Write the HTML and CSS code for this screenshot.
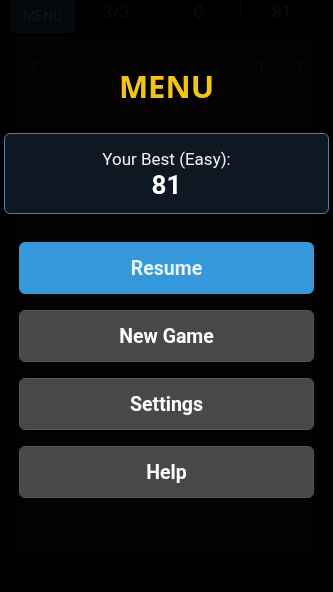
FILE: index.html
```html
<!DOCTYPE html>
<html lang="en">
<head>
    <meta charset="UTF-8">
    <meta name="viewport" content="width=device-width, initial-scale=1.0">
    <title>Menu</title>
    <link rel="stylesheet" href="styles.css">
</head>
<body>

    <!-- game behind the menu (dimmed) -->
    <div class="game">
        <div class="top-bar">
            <button class="menu-btn">MENU</button>
            <div class="stat">3/3</div>
            <div class="stat">0</div>
            <div class="stat best">81</div>
        </div>
        <div class="board">
            <div class="row">
                <span>2</span><span></span><span></span><span></span><span></span><span></span><span>1</span><span>1</span>
            </div>
        </div>
    </div>

    <!-- menu overlay -->
    <div class="overlay">
        <h1 class="menu-title">MENU</h1>

        <div class="best-box">
            <div class="best-label">Your Best (Easy):</div>
            <div class="best-score">81</div>
        </div>

        <div class="menu-buttons">
            <button class="menu-item primary">Resume</button>
            <button class="menu-item">New Game</button>
            <button class="menu-item">Settings</button>
            <button class="menu-item">Help</button>
        </div>
    </div>

</body>
</html>
```

FILE: styles.css
```css
body {
    font-family: Roboto, "Liberation Sans", Arial, sans-serif;
    margin: 0;
    padding: 0;
    background-color: #000;
    color: white;
    height: 592px;
    overflow: hidden;
}

/* dimmed game underneath */
.game {
    height: 100%;
    display: flex;
    flex-direction: column;
}

.top-bar {
    display: flex;
    align-items: center;
    height: 34px;
    padding: 0 10px;
}

.menu-btn {
    width: 65px;
    height: 34px;
    margin-top: -2px;
    background: #1a2836;
    color: #56606a;
    border: none;
    border-radius: 4px;
    font-family: inherit;
    font-size: 14px;
}

.stat {
    flex: 1;
    text-align: center;
    font-size: 18px;
    color: #3a3a3a;
    margin-top: -12px;
}

.stat.best {
    border-left: 1px solid #222;
}

.board {
    flex-grow: 1;
    margin: 2px 15px 39px;
    background: #0f0c08;
    padding-top: 22px;
}

.board .row {
    display: flex;
    justify-content: space-around;
    font-size: 16px;
    font-weight: bold;
    color: #2a2a2a;
    height: 40px;
}

.board .row span {
    width: 20px;
    text-align: center;
}

.overlay {
    position: fixed;
    top: 0;
    left: 0;
    right: 0;
    bottom: 0;
    background: rgba(0, 0, 0, 0.8);
    display: flex;
    flex-direction: column;
}

.menu-title {
    margin: 66px 0 0;
    height: 40px;
    line-height: 40px;
    text-align: center;
    font-family: "Open Sans", Roboto, sans-serif;
    font-size: 31px;
    font-weight: bold;
    color: #f2c418;
}

.best-box {
    margin: 27px 4px 0;
    padding: 14px 0 13px;
    border: 1px solid #5a80a0;
    border-radius: 6px;
    background: #0e1822;
    text-align: center;
}

.best-label {
    font-size: 17px;
    line-height: 22px;
    color: #f0f0f0;
}

.best-score {
    font-size: 26px;
    line-height: 30px;
    font-weight: bold;
}

.menu-buttons {
    margin: 28px 19px 0;
    display: flex;
    flex-direction: column;
    gap: 16px;
}

.menu-item {
    height: 52px;
    border: 1px solid #555;
    border-radius: 6px;
    background: #484848;
    color: white;
    font-family: inherit;
    font-size: 19.5px;
    font-weight: bold;
    cursor: pointer;
}

.menu-item.primary {
    background: #3498db;
    border-color: #3498db;
    color: #e6f4fd;
}
```
